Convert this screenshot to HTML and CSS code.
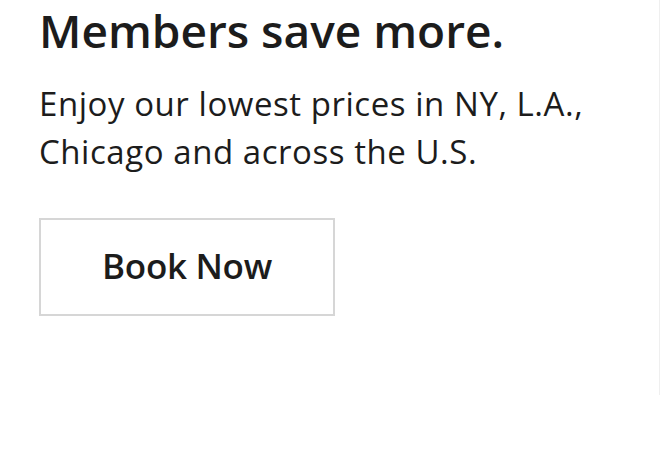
FILE: index.html
```html
<!DOCTYPE html>
<html>
<head>
<meta charset="utf-8">
<link rel="stylesheet" href="styles.css">
</head>
<body>
<div class="card">
  <h1 class="title">Members save more.</h1>
  <p class="lead">Enjoy our lowest prices in NY, L.A., Chicago and across the U.S.</p>
  <a class="btn" href="#">Book Now</a>
</div>
</body>
</html>
```

FILE: styles.css
```css
html, body {
  margin: 0;
  padding: 0;
  background: #fff;
}
.card {
  box-sizing: border-box;
  width: 660px;
  height: 395px;
  padding: 2px 0 0 39px;
  border-right: 1px solid #efefef;
  color: #1c1c1c;
  font-family: "Open Sans", "Liberation Sans", sans-serif;
}
.title {
  margin: 0;
  font-size: 46px;
  font-weight: 600;
  line-height: 56px;
}
.lead {
  margin: 22px 0 0;
  width: 580px;
  font-size: 33px;
  font-weight: 400;
  line-height: 48px;
  letter-spacing: 0.55px;
}
.btn {
  box-sizing: border-box;
  margin-top: 42px;
  padding-bottom: 4px;
  width: 296px;
  height: 98px;
  border: 2px solid #d6d6d6;
  display: flex;
  align-items: center;
  justify-content: center;
  font-size: 35px;
  font-weight: 600;
  letter-spacing: -0.3px;
  color: #1c1c1c;
  text-decoration: none;
}
```
